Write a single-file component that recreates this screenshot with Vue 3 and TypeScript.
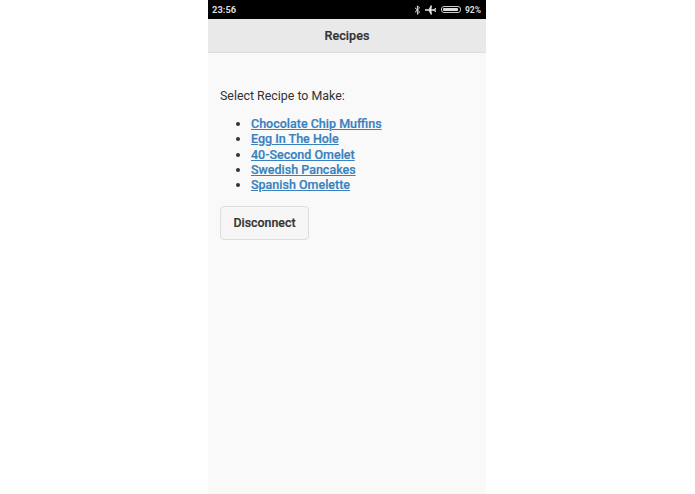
<script setup lang="ts">
const recipes: string[] = [
  'Chocolate Chip Muffins',
  'Egg In The Hole',
  '40-Second Omelet',
  'Swedish Pancakes',
  'Spanish Omelette',
]
</script>

<template>
  <div class="page">
    <div class="phone">
      <div class="status">
        <span class="time">23:56</span>
        <div class="tray">
          <svg class="bt" width="7" height="10" viewBox="0 0 7 10" fill="none" stroke="#ddd" stroke-width="1">
            <path d="M1 2.8 L5.6 7 L3.4 9.2 V0.8 L5.6 3 L1 7.2" />
          </svg>
          <svg class="plane" width="11" height="10" viewBox="0 0 11 10" fill="#e4e4e4">
            <path d="M0 4.2 H3.8 L5.6 0.4 H7 L6.4 4.2 H9.2 L10 3 H11 L10.5 5 L11 7 H10 L9.2 5.8 H6.4 L7 9.6 H5.6 L3.8 5.8 H0 Z" />
          </svg>
          <div class="battery"><div class="level"></div></div>
          <span class="pct">92%</span>
        </div>
      </div>
      <header class="bar">Recipes</header>
      <main class="content">
        <p class="lead">Select Recipe to Make:</p>
        <ul class="list">
          <li v-for="r in recipes" :key="r"><a href="#" @click.prevent>{{ r }}</a></li>
        </ul>
        <button class="btn" type="button">Disconnect</button>
      </main>
    </div>
  </div>
</template>

<style>
html, body { margin: 0; background: #fff; }
</style>

<style scoped>
.page {
  width: 695px;
  height: 494px;
  display: flex;
  justify-content: center;
  overflow: hidden;
  background: #fff;
  font-family: Roboto, "Liberation Sans", sans-serif;
}
.phone {
  width: 278px;
  margin-left: -1px;
  display: flex;
  flex-direction: column;
  background: #f9f9f9;
}
.status {
  height: 19px;
  flex: none;
  background: #000;
  color: #ddd;
  display: flex;
  align-items: center;
  justify-content: space-between;
  padding: 0 5px 0 4px;
  font-size: 9px;
  font-weight: 500;
}
.time { font-size: 9.4px; font-weight: 700; }
.tray { display: flex; align-items: center; }
.bt { margin-right: 4px; }
.plane { margin-right: 5px; }
.battery {
  width: 20px;
  height: 7px;
  box-sizing: border-box;
  border: 1px solid #ccc;
  border-radius: 3px;
  padding: 1px;
  margin-right: 4px;
}
.level { height: 100%; width: 92%; background: #ddd; border-radius: 1px; }
.pct { font-size: 8.5px; font-weight: 700; }
.bar {
  height: 34px;
  flex: none;
  box-sizing: border-box;
  background: #e9e9e9;
  border-bottom: 1px solid #ddd;
  display: flex;
  align-items: center;
  justify-content: center;
  color: #333;
  font-size: 12.6px;
  font-weight: 500;
  -webkit-text-stroke: 0.2px #333;
}
.content { padding: 0 12px; color: #333; }
.lead {
  margin: 34px 0 0;
  font-size: 12.4px;
  line-height: 17px;
}
.list {
  margin: 12px 0 0;
  padding: 0 0 0 31px;
  font-size: 12.5px;
  line-height: 15.3px;
}
.list a { color: #3881bf; font-weight: 500; text-decoration: underline; -webkit-text-stroke: 0.2px #3881bf; }
.btn {
  display: block;
  margin-top: 14px;
  width: 89px;
  height: 34px;
  padding: 0 0 1px;
  background: #f6f6f6;
  border: 1px solid #ddd;
  border-radius: 4px;
  color: #333;
  font: 500 12.4px Roboto, "Liberation Sans", sans-serif;
  -webkit-text-stroke: 0.2px #333;
}
</style>
